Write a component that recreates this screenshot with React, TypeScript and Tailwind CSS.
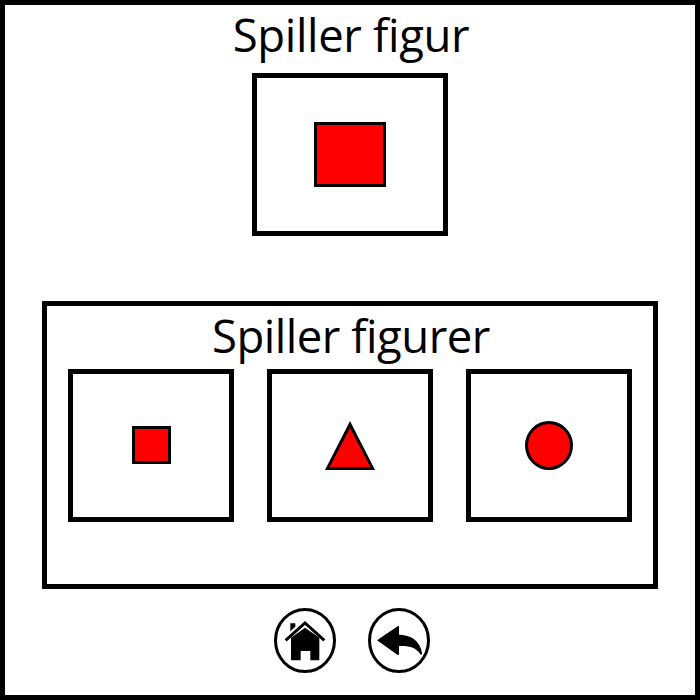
import type { ReactNode } from "react";

function Heading({ className, children }: { className: string; children: ReactNode }) {
  return (
    <h1
      className={`whitespace-nowrap pl-[2px] text-center font-['Open_Sans','Noto_Sans',sans-serif] text-[45.5px] leading-[58px] ${className}`}
    >
      {children}
    </h1>
  );
}

function Card({ children }: { children: ReactNode }) {
  return (
    <div className="flex h-[153px] w-[166px] items-center justify-center border-5 border-black">
      {children}
    </div>
  );
}

function RoundButton({ label, children }: { label: string; children: ReactNode }) {
  return (
    <button aria-label={label} className="h-[65px] w-[62px]">
      <svg viewBox="18 24 186 195" className="block h-[65px] w-[62px]">
        <ellipse cx="111" cy="121.5" rx="88.5" ry="93" fill="white" stroke="black" strokeWidth="9" />
        {children}
      </svg>
    </button>
  );
}

export default function App() {
  return (
    <main className="flex h-[700px] w-[700px] flex-col items-center overflow-hidden border-5 border-black bg-white text-black">
      <Heading className="h-[68px] tracking-[-0.35px]">Spiller figur</Heading>
      <div className="flex h-[163px] w-[196px] items-center justify-center border-5 border-black">
        <div className="h-[65px] w-[72px] border-3 border-black bg-[#ff0000]" />
      </div>

      <section className="mt-[65px] h-[288px] w-[616px] border-5 border-black">
        <Heading className="h-[63px] tracking-[-0.5px]">Spiller figurer</Heading>
        <div className="flex justify-center gap-[33px]">
          <Card>
            <div className="mb-px h-[38px] w-[39px] border-3 border-black bg-[#ff0000]" />
          </Card>
          <Card>
            <svg viewBox="0 0 50 49" className="h-[49px] w-[50px]">
              <path d="M25 0 50 49H0Z" fill="black" />
              <path d="M25 7 45.3 46H4.7Z" fill="#ff0000" />
            </svg>
          </Card>
          <Card>
            <div className="h-[49px] w-[48px] rounded-[50%] border-3 border-black bg-[#ff0000]" />
          </Card>
        </div>
      </section>

      <nav className="mt-[19px] ml-1 flex gap-8">
        <RoundButton label="Hjem">
          <path d="M69 113 111 83 154 113V181H127V153H98V181H69Z" fill="black" />
          <path d="M67 70H82V80L67 94Z" fill="black" />
          <path d="M53 121 111 69 169 121" fill="none" stroke="black" strokeWidth="9" />
        </RoundButton>
        <RoundButton label="Tilbage">
          <path
            d="M45 121 107 79Q111 76 111 81V104C145 104 176 122 180 160Q180 166 176 164C162 141 142 137 111 138V161Q111 167 106 164Z"
            fill="black"
          />
        </RoundButton>
      </nav>
    </main>
  );
}
